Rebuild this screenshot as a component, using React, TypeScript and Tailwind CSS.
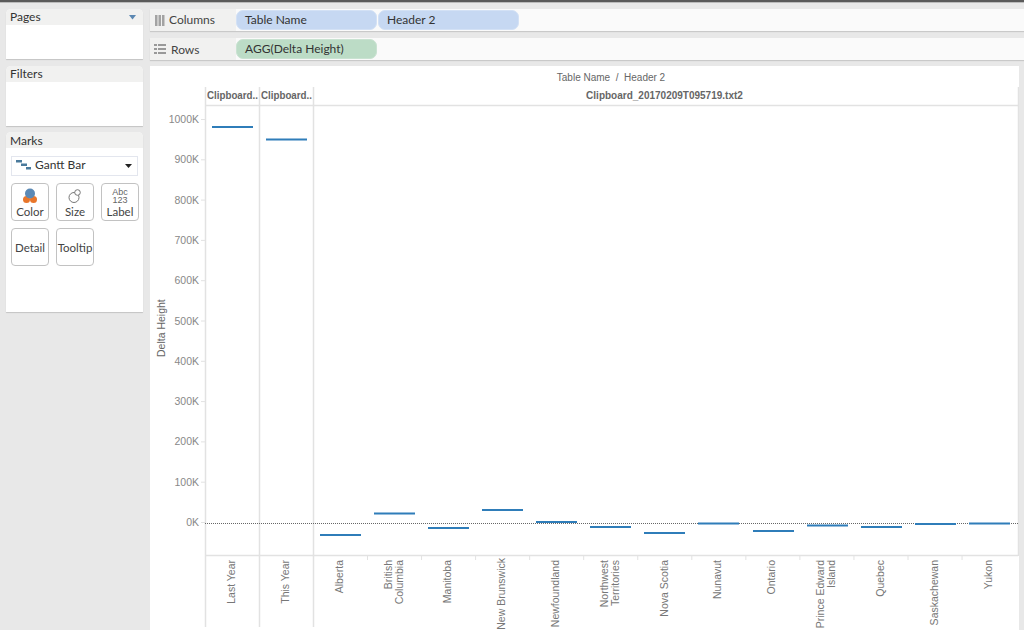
const ff = "[font-family:Lato,'Liberation_Sans',Arial,sans-serif]";

function Card({ title, arrow, shift, className, children }: { title: string; arrow?: boolean; shift?: boolean; className: string; children?: React.ReactNode }) {
  return (
    <div className={`bg-white rounded-t-[5px] shadow-[0_1px_1px_#c4c4c4] flex flex-col ${className}`}>
      <div className="h-[16px] shrink-0 bg-[#f1f1f0] rounded-t-[5px] pl-[4px] flex items-center justify-between pr-[7px] text-[12px] text-[#333]">
        <span className={shift ? "translate-y-[1px]" : ""}>{title}</span>
        {arrow && <svg width="7" height="5"><path d="M0 0h7L3.5 4.500z" fill="#5b87b2" /></svg>}
      </div>
      {children}
    </div>
  );
}

function Pill({ text, w, green }: { text: string; w: string; green?: boolean }) {
  return (
    <div className={`h-[20px] rounded-[7px] pl-[8px] flex items-center text-[12px] text-[#333] ${w} ${green ? "bg-[#bcdcc6] border border-[#c9e2d1]" : "bg-[#c6d8f2] border border-[#d3e1f5]"}`}>
      {text}
    </div>
  );
}

function MarkBtn({ label, icon }: { label: string; icon?: React.ReactNode }) {
  return (
    <div className={`w-[38px] h-[38px] rounded-[4px] border border-[#c2c2c2] bg-white flex flex-col items-center text-[11.500px] text-[#444] ${icon ? "justify-end pb-[2px]" : "justify-center"}`}>
      {icon && <div className="h-[19px] flex items-center justify-center">{icon}</div>}
      <span className="leading-[13px]">{label}</span>
    </div>
  );
}

const ticks = ["1000K","900K","800K","700K","600K","500K","400K","300K","200K","100K","0K"];
const tickY = (i: number) => 119.5 + i * 40.3;

const bars: [number, number, number][] = [
  [212, 253, 127], [266, 307, 139.5], [320, 361, 535], [374, 415, 513.5], [428, 469, 528], [482, 523, 510],
  [536, 577, 522], [590, 631, 527], [644, 685, 533], [698, 739, 523.500], [753, 794, 531], [807, 848, 525.500],
  [861, 902, 527], [915, 956, 524], [969, 1010, 523.500],
];

const labels: { x: number; y: number; lines: string[] }[] = [
  { x: 232, y: 560, lines: ["Last Year"] },
  { x: 286, y: 560, lines: ["This Year"] },
  { x: 340, y: 560, lines: ["Alberta"] },
  { x: 394, y: 560, lines: ["British", "Columbia"] },
  { x: 448, y: 560, lines: ["Manitoba"] },
  { x: 502, y: 558, lines: ["New Brunswick"] },
  { x: 556, y: 560, lines: ["Newfoundland"] },
  { x: 610, y: 560, lines: ["Northwest", "Territories"] },
  { x: 665, y: 560, lines: ["Nova Scotia"] },
  { x: 718, y: 560, lines: ["Nunavut"] },
  { x: 772, y: 560, lines: ["Ontario"] },
  { x: 826, y: 560, lines: ["Prince Edward", "Island"] },
  { x: 881, y: 560, lines: ["Quebec"] },
  { x: 935, y: 560, lines: ["Saskachewan"] },
  { x: 989, y: 560, lines: ["Yukon"] },
];

function Chart() {
  const gridc = "#e2e2e2";
  return (
    <svg className="absolute left-[-150px] top-[-66px]" width="1024" height="630" fontFamily="'Liberation Sans', Arial, sans-serif">
      <text x="611" y="81" textAnchor="middle" fontSize="10" fill="#666">{"Table Name\u00a0\u00a0/\u00a0\u00a0Header 2"}</text>
      <g fill="#666" fontWeight="bold">
        <text x="207" y="99" fontSize="10.500" textLength="51" lengthAdjust="spacingAndGlyphs">Clipboard..</text>
        <text x="261" y="99" fontSize="10.500" textLength="51" lengthAdjust="spacingAndGlyphs">Clipboard..</text>
        <text x="664.500" y="99" textAnchor="middle" fontSize="10">Clipboard_20170209T095719.txt2</text>
      </g>
      <g stroke={gridc} fill="none" strokeWidth="1.500">
        <path d="M205.500 87V627M259.500 87V627M313.500 87V627M205 105.500H1018M205 555.500H1018M1018.500 87V556" />
        {bars.slice(3).map((b, i) => <path key={i} d={`M${367.500 + i * 54.05} 556V560`} strokeWidth="1" />)}
        {ticks.map((_, i) => <path key={i} d={`M201 ${tickY(i) + 0.0}H205`} strokeWidth="1" />)}
      </g>
      <text transform="translate(165 357) rotate(-90)" fontSize="10.500" fill="#666" x="0" y="0">Delta Height</text>
      <g fontSize="10.500" fill="#888" textAnchor="end">
        {ticks.map((t, i) => <text key={t} x="199" y={tickY(i) + 3.500}>{t}</text>)}
      </g>
      <path d="M205 523.500H1020" stroke="#666" strokeDasharray="1 1" />
      <g fill="#2f7db9">
        {bars.map((b, i) => <rect key={i} x={b[0]} y={b[2] - 1} width={b[1] - b[0]} height="2" />)}
      </g>
      <g fontSize="10.500" fill="#777">
        {labels.map((l) =>
          l.lines.length === 1 ? (
            <text key={l.x} transform={`translate(${l.x + 3} ${l.y + 0}) rotate(-90)`} textAnchor="end">{l.lines[0]}</text>
          ) : (
            <g key={l.x}>
              <text transform={`translate(${l.x - 2} ${l.y}) rotate(-90)`} textAnchor="end">{l.lines[0]}</text>
              <text transform={`translate(${l.x + 9} ${l.y}) rotate(-90)`} textAnchor="end">{l.lines[1]}</text>
            </g>
          )
        )}
      </g>
    </svg>
  );
}

export default function App() {
  return (
    <div className={`w-[1024px] h-[630px] overflow-hidden bg-[#e8e8e8] flex flex-col ${ff}`}>
      <div className="h-[3px] shrink-0 bg-[#5a5a5a] border-b border-[#bbb]" />
      <div className="flex-1 flex pl-[6px] pt-[6px] min-h-0">
        <div className="w-[137px] shrink-0 flex flex-col">
          <Card title="Pages" arrow className="h-[50px]" />
          <Card title="Filters" className="h-[60px] mt-[7px]" />
          <Card title="Marks" shift className="h-[180px] mt-[6px]">
            <div className="mx-[5px] mt-[8px] h-[20px] border border-[#e3e6ee] flex items-center pl-[4px] pr-[5px] text-[12px] text-[#333]">
              <svg width="16" height="10" className="mr-[3px] -translate-y-[1px]"><path d="M0 0h6v2.500H0zM5 3.500h6V6H5zM10 7h5v2.500H10z" fill="#4a7a9c" /></svg>
              <span className="-translate-y-[1px]">Gantt Bar</span>
              <svg width="7" height="4" className="ml-auto"><path d="M0 0h7L3.500 4z" fill="#222" /></svg>
            </div>
            <div className="mx-[5px] mt-[7px] grid grid-cols-[38px_38px_38px] gap-x-[7px] gap-y-[7px]">
              <MarkBtn label="Color" icon={
                <svg width="16" height="16" viewBox="0 0 16 16"><circle cx="4.500" cy="11.500" r="3.500" fill="#e8762b" /><circle cx="11.500" cy="11.500" r="3.500" fill="#e8762b" /><circle cx="8" cy="5.500" r="5" fill="#5b89b5" /></svg>
              } />
              <MarkBtn label="Size" icon={
                <svg width="16" height="16" viewBox="0 0 16 16" fill="none" stroke="#777"><circle cx="7" cy="9.500" r="5" /><circle cx="10.500" cy="4.500" r="2.800" fill="#fff" /></svg>
              } />
              <MarkBtn label="Label" icon={
                <div className="text-[9px] leading-[8px] text-[#666] text-center [font-family:'Liberation_Sans',Arial,sans-serif]"><div>Abc</div><div>123</div></div>
              } />
              <MarkBtn label="Detail" />
              <MarkBtn label="Tooltip" />
            </div>
          </Card>
        </div>
        <div className="flex-1 ml-[7px] flex flex-col min-w-0 pr-[5px] relative">
          <div className="h-[22px] flex bg-[#fafafa] shadow-[0_1px_1px_#c9c9c9] mr-[-5px]">
            <div className="w-[86px] bg-[#f1f1f0] flex items-center pl-[5px] text-[12px] text-[#444]">
              <svg width="10" height="11" className="mr-[4px]"><path d="M0 0h2.500v11H0zM3.500 0H6v11H3.500zM7 0h2.500v11H7z" fill="#a3a3a3" /></svg>
              <span>Columns</span>
            </div>
            <div className="flex gap-[1px] items-center">
              <Pill text="Table Name" w="w-[141px]" />
              <Pill text="Header 2" w="w-[141px]" />
            </div>
          </div>
          <div className="h-[22px] mt-[7px] flex bg-[#fafafa] shadow-[0_1px_1px_#c9c9c9] mr-[-5px]">
            <div className="w-[86px] bg-[#f1f1f0] flex items-center pl-[4px] text-[12px] text-[#444]">
              <svg width="12" height="10" className="mr-[5px]"><path d="M0 0h3v2H0zM4 0h8v2H4zM0 4h3v2H0zM4 4h8v2H4zM0 8h3v2H0zM4 8h8v2H4z" fill="#999" /></svg>
              <span className="translate-y-[1px]">Rows</span>
            </div>
            <div className="flex items-center"><Pill text="AGG(Delta Height)" w="w-[141px]" green /></div>
          </div>
          <div className="flex-1 mt-[6px] bg-white relative overflow-hidden">
            <Chart />
          </div>
        </div>
      </div>
    </div>
  );
}
